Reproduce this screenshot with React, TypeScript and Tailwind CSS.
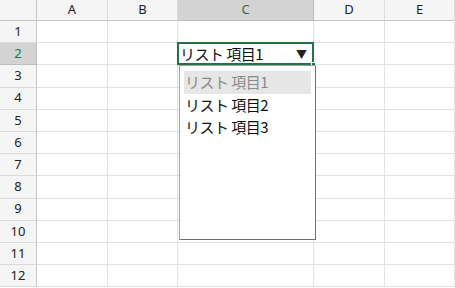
import React from 'react';

const columns = [
  { key: 'A', width: 'w-[71px]' },
  { key: 'B', width: 'w-[70px]' },
  { key: 'C', width: 'w-[136px]' },
  { key: 'D', width: 'w-[71px]' },
  { key: 'E', width: 'w-[70px]' },
];

const rows = Array.from({ length: 12 }, (_, i) => i + 1);

const items = ['リスト 項目1', 'リスト 項目2', 'リスト 項目3'];

const jpFont = { fontFamily: '"Noto Sans CJK JP", "Noto Sans", sans-serif' };

function Cell({ row, col }: { row: number; col: string }) {
  const active = row === 2 && col === 'C';
  if (!active) {
    return <div className="border-r border-b border-[#e1e1e1] bg-white" />;
  }
  return (
    <div className="relative border-r border-b border-[#e1e1e1] bg-white">
      {/* selection frame + fill handle */}
      <div className="absolute -left-px -top-px -right-px -bottom-px border-2 border-[#217346]" />
      <div className="absolute -right-[3px] -bottom-[3px] w-[5px] h-[5px] bg-[#217346] border border-white" />
      <div className="flex items-center h-full pl-[2px] pr-[6px] text-[15px] text-[#111]" style={jpFont}>
        <span className="tracking-[-0.5px]">リスト 項目1</span>
        <span className="ml-auto text-[11px] text-[#222]">▼</span>
      </div>
    </div>
  );
}

export default function App() {
  return (
    <div className="relative w-[455px] h-[288px] overflow-hidden bg-white" style={{ fontFamily: '"Noto Sans", "Open Sans", sans-serif' }}>
      <div className="grid grid-cols-[37px_71px_70px_136px_71px_70px] grid-rows-[21px_repeat(12,22.2px)]">
        {/* header row */}
        <div className="bg-[#f5f5f5] border-r border-b border-[#c6c6c6]" />
        {columns.map((c) => (
          <div
            key={c.key}
            className={`flex items-center justify-center text-[13px] border-r border-b ${
              c.key === 'C'
                ? 'bg-[#d3d3d3] text-[#217346] border-[#bdbdbd]'
                : 'bg-[#f5f5f5] text-[#222] border-[#dadada] border-b-[#c6c6c6]'
            }`}
          >
            {c.key}
          </div>
        ))}

        {rows.map((r) => (
          <React.Fragment key={r}>
            <div
              className={`flex items-center justify-center text-[13px] border-r border-b ${
                r === 2
                  ? 'bg-[#d3d3d3] text-[#217346] border-[#bdbdbd]'
                  : 'bg-[#f5f5f5] text-[#222] border-[#dadada] border-r-[#c6c6c6]'
              }`}
            >
              {r}
            </div>
            {columns.map((c) => (
              <Cell key={c.key} row={r} col={c.key} />
            ))}
          </React.Fragment>
        ))}
      </div>

      {/* validation list dropdown */}
      <div className="absolute left-[179px] top-[65px] w-[137px] h-[175px] bg-white border border-[#a0a0a0] border-r-[#707070] border-b-[#707070] pt-[5px] px-[4px]">
        {items.map((t, i) => (
          <div
            key={t}
            className={`h-[22.5px] flex items-center pl-[1px] text-[15px] tracking-[-0.5px] ${
              i === 0 ? 'bg-[#e6e6e6] text-[#8a8a8a]' : 'text-[#111]'
            }`}
            style={jpFont}
          >
            {t}
          </div>
        ))}
      </div>
    </div>
  );
}
